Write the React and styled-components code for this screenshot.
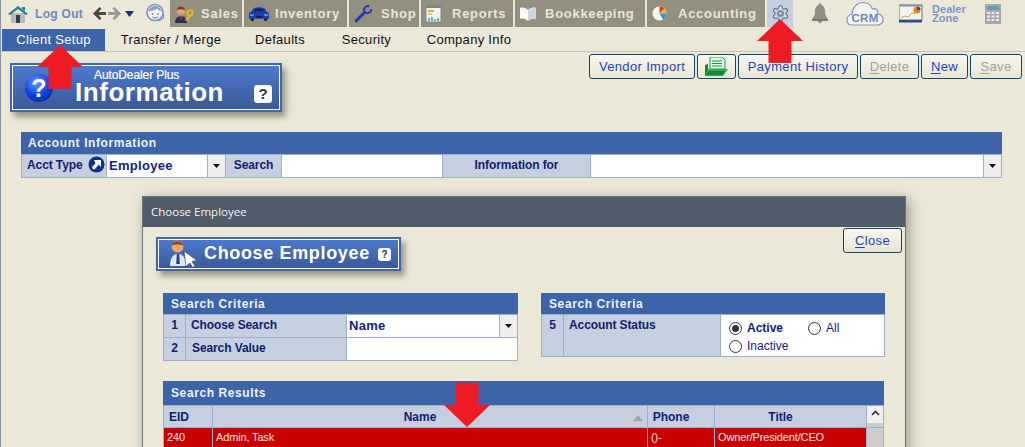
import styled, { createGlobalStyle } from "styled-components";

const GlobalStyle = createGlobalStyle`
  html, body {
    margin: 0;
    padding: 0;
    height: 100%;
    overflow: hidden;
    background: #ebe8d8;
  }
  * { box-sizing: border-box; }
`;

/* ---------- icons ---------- */
const HomeIcon = () => (
  <svg width="22" height="20" viewBox="0 0 22 20">
    <path d="M4 9h14v10H4z" fill="#b9bcbc" />
    <path d="M9 11h4v8H9z" fill="#33404a" />
    <path d="M1 10 11 2l10 8-2 1-8-6-8 6z" fill="#1f7f94" />
    <path d="M15 3h3v4l-3-2z" fill="#1f7f94" />
  </svg>
);
const BackArrow = ({ color }) => (
  <svg width="13" height="15" viewBox="0 0 13 15">
    <path d="M0 7.500 6.500 1l2 1.500L5.500 6H13v3H5.500l3 3.500-2 1.500z" fill={color} />
  </svg>
);
const NextArrow = ({ color }) => (
  <svg width="13" height="15" viewBox="0 0 13 15">
    <path d="M13 7.500 6.500 1l-2 1.500L7.500 6H0v3h7.500l-3 3.500 2 1.500z" fill={color} />
  </svg>
);
const Caret = () => (
  <svg width="9" height="6" viewBox="0 0 9 6">
    <path d="M0 0h9L4.500 6z" fill="#12308a" />
  </svg>
);
const AgentIcon = () => (
  <svg width="21" height="23" viewBox="0 0 21 23">
    <circle cx="10" cy="10.500" r="8" fill="#f4f3ea" stroke="#7590c6" strokeWidth="1.500" />
    <path d="M3 9c2-4 5-5.500 8-5 3 .5 5 2.500 6 5.500-3-.5-4-2-5-3-2 2-5 2.500-9 2.500z" fill="#8aa2d0" />
    <circle cx="7.500" cy="12" r=".9" fill="#6f8cc2" />
    <circle cx="13" cy="12" r=".9" fill="#6f8cc2" />
    <path d="M7.500 15c2 1.300 3.500 1.300 5.500 0M18.500 12v4l-5 3" fill="none" stroke="#7590c6" strokeWidth="1.200" />
  </svg>
);
const SalesIcon = () => (
  <svg width="21" height="20" viewBox="0 0 21 20">
    <path d="M1 19c0-5 3-7 6-7s6 2 6 7z" fill="#26344f" />
    <path d="M6 12h2l-1 5z" fill="#d33" />
    <circle cx="7" cy="7" r="4" fill="#e0a078" />
    <path d="M3 6c0-4 7-5 8 0-3-1-5-1-8 0z" fill="#7c3f1c" />
    <circle cx="16" cy="9" r="2.800" fill="none" stroke="#e8b923" strokeWidth="1.800" />
    <path d="M14.500 11 11 16l1 1 1-1 1 1 2-4z" fill="#e8b923" />
  </svg>
);
const CarIcon = () => (
  <svg width="23" height="14" viewBox="0 0 23 14">
    <path d="M3 10h3v4H3zM17 10h3v4h-3z" fill="#111" />
    <path d="M1 7c0-2 2-2 3-3 1-3 3-4 7.500-4S18 1 19 4c1 1 3 1 3 3v5H1z" fill="#1c3fb0" />
    <path d="M6 4c1-2 3-2.500 5.500-2.500S16 2 17 4z" fill="#0b1f5e" />
    <path d="M2 7h4v2H2zM17 7h4v2h-4z" fill="#5f87e8" />
    <path d="M8 9h7v2H8z" fill="#0b1f5e" />
  </svg>
);
const WrenchIcon = () => (
  <svg width="18" height="18" viewBox="0 0 18 18" fill="none">
    <path d="M2.200 15.800 10.500 7.500" stroke="#2337c0" strokeWidth="3" strokeLinecap="round" />
    <path d="M15.300 1.300a4 4 0 0 0-5 5.200l2 1.500a4 4 0 0 0 5-4" stroke="#2337c0" strokeWidth="2" />
  </svg>
);
const ReportIcon = () => (
  <svg width="18" height="18" viewBox="0 0 18 18">
    <path d="M1 1h15v16H1z" fill="#f3f3ea" stroke="#7c8a86" />
    <path d="M1 1h15v2H1z" fill="#6d8a8c" />
    <path d="M3 5h6v2H3z" fill="#eda83a" />
    <path d="M3 8h4v2H3z" fill="#eec477" />
    <path d="M3 13h2v3H3zM6 12h2v4H6zM9 14h2v2H9zM12 13h2v3h-2z" fill="#56bdb0" />
  </svg>
);
const BookIcon = () => (
  <svg width="16" height="14" viewBox="0 0 16 14">
    <path d="M0 1c3-1 6 0 8 2 2-2 5-3 8-2v11c-3-1-6 0-8 2-2-2-5-3-8-2z" fill="#fbfbf5" />
    <path d="M8 3v11c2-2 5-3 8-2V1c-3-1-6 0-8 2z" fill="#cfd6dc" />
  </svg>
);
const PieIcon = () => (
  <svg width="16" height="15" viewBox="0 0 16 15">
    <circle cx="7.500" cy="7.500" r="7" fill="#f6f6f0" />
    <path d="M7.500 7.500V.5a7 7 0 0 1 5 2.200z" fill="#d8452b" />
    <path d="M7.500 7.500l5-4.800a7 7 0 0 1 2 4.800z" fill="#eeb423" />
    <path d="M7.500 7.500h7a7 7 0 0 1-3.500 6z" fill="#2a9ac7" />
  </svg>
);
const GearIcon = () => (
  <svg width="19" height="19" viewBox="0 0 24 24">
    <path d="M12.220 2h-.44a2 2 0 0 0-2 2v.18a2 2 0 0 1-1 1.730l-.43.250a2 2 0 0 1-2 0l-.15-.080a2 2 0 0 0-2.730.730l-.22.380a2 2 0 0 0 .730 2.730l.15.100a2 2 0 0 1 1 1.720v.510a2 2 0 0 1-1 1.740l-.15.090a2 2 0 0 0-.730 2.730l.22.380a2 2 0 0 0 2.730.730l.15-.080a2 2 0 0 1 2 0l.43.250a2 2 0 0 1 1 1.730V20a2 2 0 0 0 2 2h.44a2 2 0 0 0 2-2v-.18a2 2 0 0 1 1-1.730l.43-.250a2 2 0 0 1 2 0l.15.080a2 2 0 0 0 2.730-.730l.22-.390a2 2 0 0 0-.730-2.730l-.15-.080a2 2 0 0 1-1-1.740v-.500a2 2 0 0 1 1-1.740l.15-.090a2 2 0 0 0 .730-2.730l-.22-.380a2 2 0 0 0-2.730-.730l-.15.080a2 2 0 0 1-2 0l-.43-.250a2 2 0 0 1-1-1.730V4a2 2 0 0 0-2-2z" fill="#cfd8e6" stroke="#6b788c" strokeWidth="1.500" />
    <circle cx="12" cy="12" r="4.500" fill="#7d8ca2" />
    <circle cx="12" cy="12" r="1.800" fill="#c4cfe0" />
  </svg>
);
const BellIcon = () => (
  <svg width="18" height="21" viewBox="0 0 18 21">
    <circle cx="9" cy="2" r="1.800" fill="#95958c" />
    <path d="M9 2c-3.500 0-5 3-5 6 0 4-1 6-3 8h16c-2-2-3-4-3-8 0-3-1.500-6-5-6z" fill="#8f8f86" />
    <path d="M1 16h16v2H1z" fill="#7a7a72" />
    <path d="M6 18h6l-3 2.500z" fill="#8f8f86" />
  </svg>
);
const CrmIcon = () => (
  <svg width="38" height="25" viewBox="0 0 38 25">
    <path d="M6 24c-3 0-5-2-5-5s2-5 5-5.500C6 7 11 1.500 17 1.500c5 0 8 2.500 9.500 6.500 1-.5 3-.5 4 .5 1.500 1.200 1.500 3 1.200 4.200 3 .8 5.300 3 5.300 6 0 3-2.500 5.300-5.500 5.300z" fill="#f5f4ea" stroke="#7f98cb" strokeWidth="1.200" />
    <text x="5.500" y="20.500" fontFamily="'Liberation Sans', Arial, sans-serif" fontSize="11.500" fontWeight="700" letterSpacing=".3" fill="#6a86c2">CRM</text>
  </svg>
);
const ChartIcon = () => (
  <svg width="24" height="19" viewBox="0 0 24 19">
    <path d="M0 1h23v15H0z" fill="#f2f3ee" stroke="#62718e" />
    <path d="M0 16h23v2.500H0z" fill="#2f4a8d" />
    <path d="M0.500 1h23v1.500H.5z" fill="#7b8fb0" />
    <path d="M2 14l4-2 3 1 4-4 3 1" fill="none" stroke="#d9a13a" strokeWidth="1" />
    <circle cx="18" cy="6" r="3.500" fill="#e47f22" />
    <path d="M18 6V2.500A3.500 3.500 0 0 1 21.500 6z" fill="#2f4a8d" />
  </svg>
);
const CalcIcon = () => (
  <svg width="16" height="20" viewBox="0 0 16 20">
    <path d="M0 0h16v20H0z" fill="#a5a8ad" />
    <path d="M2 2h12v4H2z" fill="#5fa3b3" />
    <path d="M2 8h3v2H2zM6.500 8h3v2h-3zM11 8h3v2h-3zM2 11.500h3v2H2zM6.500 11.500h3v2h-3zM11 11.500h3v2h-3zM2 15h3v2H2zM6.500 15h3v2h-3zM11 15h3v2h-3z" fill="#eeeee8" />
  </svg>
);
const QuestionOrb = () => (
  <svg width="30" height="30" viewBox="0 0 30 30">
    <defs>
      <radialGradient id="orb" cx=".4" cy=".3" r=".8">
        <stop offset="0" stopColor="#5f9bff" />
        <stop offset=".6" stopColor="#0e3fdc" />
        <stop offset="1" stopColor="#0a2a9c" />
      </radialGradient>
    </defs>
    <circle cx="15" cy="15" r="14" fill="url(#orb)" />
    <text x="15" y="24" textAnchor="middle" fontFamily="'Liberation Sans', Arial, sans-serif" fontSize="25" fontWeight="700" fill="#fff">?</text>
  </svg>
);
const EmployeeIcon = () => (
  <svg width="28" height="28" viewBox="0 0 28 28">
    <path d="M0 26c0-8 3-12 8-12s8 4 8 12z" fill="#dfe6f6" />
    <path d="M6.800 14h2.400l.6 10H6.200z" fill="#27408f" />
    <circle cx="7.500" cy="6.500" r="6" fill="#e9a76f" />
    <path d="M1.500 5.500c0-5 11-6 12 0-4-1.500-8-1.500-12 0z" fill="#8f4d1f" />
    <path d="M14 11l13 9.500-5 1 3 4.500-2.200 1.500-3-4.500-3.800 3.500z" fill="#fff" stroke="#333" strokeWidth=".6" />
  </svg>
);
const FolderIcon = () => (
  <svg width="23" height="20" viewBox="0 0 23 20">
    <path d="M5 0h12l3 3v9H5z" fill="#e4f6e0" stroke="#19a24a" />
    <path d="M7 4h10M7 6.500h10M7 9h10" stroke="#19a24a" />
    <path d="M0 19V8l3-1v5h17v2l-3 5z" fill="#0f8a3a" />
    <path d="M3 12h20l-5 7H0z" fill="#2caf4f" />
    <path d="M1 18l3-4h16l-2 4z" fill="#158a3f" />
  </svg>
);
const CircleArrow = () => (
  <svg width="17" height="17" viewBox="0 0 17 17">
    <circle cx="8.500" cy="8.500" r="8" fill="#0f3187" />
    <path d="M6 4h7v7l-2.300-2.300L7 13 5 13.500 4 11l3.500-3.800z" fill="#f3f5ff" />
  </svg>
);
const SmallCaret = () => (
  <svg width="7" height="4" viewBox="0 0 7 4">
    <path d="M0 0h7L3.500 4z" fill="#111" />
  </svg>
);
const UpChevron = () => (
  <svg width="9" height="6" viewBox="0 0 9 6">
    <path d="M1 5l3.500-3.500L8 5" fill="none" stroke="#333" strokeWidth="1.600" />
  </svg>
);

/* ---------- top nav ---------- */
const Page = styled.div`
  position: relative;
  width: 1025px;
  height: 447px;
  overflow: hidden;
  background: #ebe8d8;
  font-family: "Liberation Sans", Arial, sans-serif;
  border-left: 1px solid #8593a3;
`;

const TopNav = styled.nav`
  display: flex;
  align-items: stretch;
  height: 27px;
`;

const NavIcon = styled.div`
  display: flex;
  align-items: center;
  justify-content: center;
  margin-left: ${(p) => p.$ml || 0}px;
  width: ${(p) => p.$w}px;
`;

const LogOut = styled.span`
  align-self: center;
  margin-left: 6px;
  font-size: 12px;
  font-weight: 700;
  letter-spacing: 0.3px;
  color: #6c8bc6;
`;

const Tab = styled.div`
  display: flex;
  align-items: center;
  width: ${(p) => p.$w}px;
  margin-left: ${(p) => p.$ml || 2}px;
  background: #94907f;
  color: #ebe7d6;
  font-size: 13px;
  font-weight: 700;
  letter-spacing: 0.7px;
`;

const TabIcon = styled.span`
  display: flex;
  justify-content: center;
  width: ${(p) => p.$w}px;
  margin-left: ${(p) => p.$ml || 3}px;
`;

const TabLabel = styled.span`
  margin-left: ${(p) => p.$ml}px;
`;

const GearBox = styled.div`
  display: flex;
  align-items: center;
  justify-content: center;
  width: 26px;
  margin-left: 2px;
  background: #c3cfe0;
`;

const DealerZone = styled.div`
  align-self: center;
  margin-left: 9px;
  width: 39px;
  font-size: 11px;
  font-weight: 700;
  line-height: 9px;
  color: #7d95cb;
`;

/* ---------- sub nav ---------- */
const SubNav = styled.div`
  display: flex;
  margin-top: 2px;
  height: 23px;
  padding-left: 1px;
  border-bottom: 1px solid #c7c4b3;
`;

const SubItem = styled.div`
  width: ${(p) => p.$w}px;
  height: 22px;
  line-height: 22px;
  text-align: center;
  font-size: 13px;
  letter-spacing: 0.3px;
  color: ${(p) => (p.$active ? "#fff" : "#111")};
  background: ${(p) => (p.$active ? "#3d64a8" : "transparent")};
`;

/* ---------- toolbar + page banner ---------- */
const HeadRow = styled.div`
  display: flex;
  justify-content: space-between;
  align-items: flex-start;
  padding: 2px 3px 0 9px;
`;

const Banner = styled.div`
  display: flex;
  align-items: center;
  width: ${(p) => p.$w}px;
  height: ${(p) => p.$h}px;
  margin-top: ${(p) => p.$mt}px;
  padding: 0 ${(p) => p.$pr}px 0 ${(p) => p.$pl}px;
  color: #fff;
  background: linear-gradient(#4d7ad0, #3a5896);
  border: 2px solid #3d66b4;
  outline: 1px solid #fff;
  outline-offset: -3px;
  box-shadow: 4px 5px 6px rgba(90, 85, 65, 0.55);
`;

const BannerText = styled.div`
  display: flex;
  flex-direction: column;
  margin-left: 21px;
`;

const BannerSmall = styled.span`
  font-size: 12px;
  line-height: 12px;
  letter-spacing: -0.1px;
  margin-left: 19px;
  -webkit-text-stroke: 0.2px #fff;
`;

const BannerBig = styled.span`
  margin: -2px 0 2px;
  font-size: 26px;
  font-weight: 700;
  line-height: 26px;
  letter-spacing: 0.55px;
`;

const HelpBadge = styled.span`
  display: flex;
  align-items: center;
  justify-content: center;
  width: ${(p) => p.$size}px;
  height: ${(p) => p.$size}px;
  margin-left: auto;
  margin-top: ${(p) => p.$mt || 0}px;
  border-radius: 3px;
  background: #fbfbf8;
  color: #26365c;
  font-size: ${(p) => p.$size - 3}px;
  font-weight: 700;
`;

const Toolbar = styled.div`
  display: flex;
  gap: 2px;
`;

const Button = styled.button`
  display: flex;
  align-items: center;
  justify-content: center;
  width: ${(p) => p.$w}px;
  height: 25px;
  padding: 0;
  font-family: inherit;
  font-size: 13px;
  letter-spacing: 0.35px;
  color: ${(p) => (p.$off ? "#a3a299" : "#1b45c6")};
  background: linear-gradient(#f9f7ee, #e9e5d3);
  border: 1px solid #0f4476;
  border-radius: 3px;
  u {
    text-decoration-thickness: 1px;
    text-underline-offset: 2px;
  }
`;

/* ---------- data panels ---------- */
const Panel = styled.section`
  width: ${(p) => p.$w}px;
  margin: ${(p) => p.$m || 0};
`;

const PanelTitle = styled.div`
  height: ${(p) => p.$h || 21}px;
  line-height: ${(p) => p.$h || 22}px;
  padding-left: ${(p) => p.$pl || 8}px;
  background: #3d64a8;
  color: #eef1f8;
  font-size: 12px;
  font-weight: 700;
  letter-spacing: 0.6px;
`;

const Grid = styled.div`
  display: grid;
  grid-template-columns: ${(p) => p.$cols};
  grid-auto-rows: ${(p) => p.$row}px;
  gap: 1px;
  padding: 1px;
  background: #9db0ca;
`;

const Label = styled.div`
  display: flex;
  align-items: flex-start;
  justify-content: ${(p) => p.$align || "flex-start"};
  gap: 5px;
  padding: 3px 0 0 ${(p) => p.$pl || 0}px;
  background: #c5cfdf;
  color: #0f1f6e;
  font-size: 12px;
  font-weight: 700;
  letter-spacing: -0.1px;
  white-space: nowrap;
  svg {
    flex-shrink: 0;
    margin-top: -2px;
  }
`;

const Value = styled.div`
  grid-column: span ${(p) => p.$span || 1};
  padding: 3px 0 0 2px;
  background: #fff;
  color: #10228a;
  font-size: 13px;
  font-weight: 700;
  letter-spacing: 0.3px;
`;

const DropBtn = styled.div`
  display: flex;
  align-items: center;
  justify-content: center;
  background: #efefef;
`;

const StatusCell = styled.div`
  display: grid;
  grid-template-columns: 79px 1fr;
  align-content: start;
  row-gap: 4px;
  padding: 6px 0 0 8px;
  background: #fff;
`;

const RadioOption = styled.label`
  display: flex;
  align-items: center;
  gap: 5px;
  height: 14px;
  color: #10228a;
  font-size: 12px;
  font-weight: ${(p) => (p.$on ? 700 : 400)};
`;

const RadioDot = styled.span`
  display: flex;
  align-items: center;
  justify-content: center;
  width: 13px;
  height: 13px;
  border: 1px solid #333;
  border-radius: 50%;
  background: #fff;
  &::after {
    content: "";
    display: ${(p) => (p.$on ? "block" : "none")};
    width: 7px;
    height: 7px;
    border-radius: 50%;
    background: #333;
  }
`;

/* ---------- dialog ---------- */
const Dialog = styled.div`
  position: absolute;
  left: 141px;
  top: 196px;
  width: 764px;
  height: 330px;
  background: #ebe8d8;
  border: 1px solid #6b7280;
  box-shadow: 3px 3px 12px rgba(80, 75, 55, 0.5);
`;

const DialogTitle = styled.div`
  height: 30px;
  line-height: 30px;
  padding-left: 8px;
  background: #515c6b;
  color: #f2f2f2;
  font-family: "Open Sans", "Noto Sans", sans-serif;
  font-size: 11.500px;
`;

const DialogHead = styled.div`
  display: flex;
  justify-content: space-between;
  align-items: flex-start;
  padding: 1px 3px 0 13px;
`;

const EmployeeTitle = styled.span`
  margin: 0 0 2px 6px;
  font-size: 18px;
  font-weight: 700;
  letter-spacing: 0.65px;
  white-space: nowrap;
`;

const DialogBody = styled.div`
  padding: 22px 0 0 20px;
`;

const CriteriaRow = styled.div`
  display: flex;
  align-items: flex-start;
  gap: 23px;
`;

const HeadCell = styled.div`
  display: flex;
  align-items: center;
  justify-content: ${(p) => (p.$left ? "flex-start" : "center")};
  padding: 0 ${(p) => (p.$left ? 0 : 20)}px 0 ${(p) => (p.$left ? 5 : 0)}px;
  position: relative;
  background: #c5cfdf;
  color: #0f1f6e;
  font-size: 12px;
  font-weight: 700;
`;

const SortMark = styled.span`
  position: absolute;
  right: 4px;
  top: 9px;
  width: 0;
  height: 0;
  border-left: 5px solid transparent;
  border-right: 5px solid transparent;
  border-bottom: 6px solid #a5a5a5;
`;

const ResultsBody = styled.div`
  display: grid;
  grid-template-columns: 48px 434px 66px 151px 16px;
  gap: 0 1px;
  padding-left: 1px;
  background: #9db0ca;
  grid-auto-rows: 22px;
`;

const RedCell = styled.div`
  padding: 3px 0 0 3px;
  background: #c80000;
  color: #fde6e6;
  font-size: 11px;
  letter-spacing: -0.15px;
  white-space: nowrap;
`;

const ScrollTop = styled.div`
  display: flex;
  justify-content: center;
  padding-top: 4px;
  background: linear-gradient(#f0f0f0 17px, #cdcdcd 17px);
`;

const ScrollTrack = styled.div`
  background: #cdcdcd;
`;

/* ---------- red callout arrows ---------- */
const Callout = styled.svg`
  position: absolute;
  left: ${(p) => p.$x}px;
  top: ${(p) => p.$y}px;
`;

const UpArrow = ({ x, y }) => (
  <Callout $x={x} $y={y} width="46" height="44" viewBox="0 0 46 44">
    <path d="M23 0 46 22H34.500V44H11.500V22H0z" fill="#ed1c24" />
  </Callout>
);

export default function App() {
  return (
    <Page>
      <GlobalStyle />
      <TopNav>
        <NavIcon $w={22} $ml={6}><HomeIcon /></NavIcon>
        <LogOut>Log Out</LogOut>
        <NavIcon $w={13} $ml={10}><BackArrow color="#4a4a44" /></NavIcon>
        <NavIcon $w={13} $ml={2}><NextArrow color="#9b9a8c" /></NavIcon>
        <NavIcon $w={9} $ml={4}><Caret /></NavIcon>
        <NavIcon $w={21} $ml={11}><AgentIcon /></NavIcon>
        <Tab $w={72} $ml={4}>
          <TabIcon $w={22}><SalesIcon /></TabIcon>
          <TabLabel $ml={6}>Sales</TabLabel>
        </Tab>
        <Tab $w={103}>
          <TabIcon $w={22} $ml={4}><CarIcon /></TabIcon>
          <TabLabel $ml={5}>Inventory</TabLabel>
        </Tab>
        <Tab $w={70} $ml={2}>
          <TabIcon $w={20} $ml={4}><WrenchIcon /></TabIcon>
          <TabLabel $ml={8}>Shop</TabLabel>
        </Tab>
        <Tab $w={92}>
          <TabIcon $w={20}><ReportIcon /></TabIcon>
          <TabLabel $ml={8}>Reports</TabLabel>
        </Tab>
        <Tab $w={130}>
          <TabIcon $w={20}><BookIcon /></TabIcon>
          <TabLabel $ml={7}>Bookkeeping</TabLabel>
        </Tab>
        <Tab $w={118}>
          <TabIcon $w={19}><PieIcon /></TabIcon>
          <TabLabel $ml={9}>Accounting</TabLabel>
        </Tab>
        <GearBox><GearIcon /></GearBox>
        <NavIcon $w={18} $ml={18}><BellIcon /></NavIcon>
        <NavIcon $w={38} $ml={17}><CrmIcon /></NavIcon>
        <NavIcon $w={24} $ml={15}><ChartIcon /></NavIcon>
        <DealerZone>Dealer Zone</DealerZone>
        <NavIcon $w={16} $ml={14}><CalcIcon /></NavIcon>
      </TopNav>

      <SubNav>
        <SubItem $w={103} $active>Client Setup</SubItem>
        <SubItem $w={132}>Transfer / Merge</SubItem>
        <SubItem $w={86}>Defaults</SubItem>
        <SubItem $w={87}>Security</SubItem>
        <SubItem $w={118}>Company Info</SubItem>
      </SubNav>

      <HeadRow>
        <Banner $w={272} $h={49} $mt={9} $pl={12} $pr={8}>
          <QuestionOrb />
          <BannerText>
            <BannerSmall>AutoDealer Plus</BannerSmall>
            <BannerBig>Information</BannerBig>
          </BannerText>
          <HelpBadge $size={18} $mt={12}>?</HelpBadge>
        </Banner>
        <Toolbar>
          <Button $w={106}>Vendor Import</Button>
          <Button $w={39}><FolderIcon /></Button>
          <Button $w={120}>Payment History</Button>
          <Button $w={59} $off><span><u>D</u>elete</span></Button>
          <Button $w={47}><span><u>N</u>ew</span></Button>
          <Button $w={52} $off><span><u>S</u>ave</span></Button>
        </Toolbar>
      </HeadRow>

      <Panel $w={981} $m="20px 0 0 20px">
        <PanelTitle $h={22} $pl={7}>Account Information</PanelTitle>
        <Grid $cols="84px 100px 17px 55px 160px 147px 392px 17px" $row={22}>
          <Label $pl={5}>Acct Type<CircleArrow /></Label>
          <Value>Employee</Value>
          <DropBtn><SmallCaret /></DropBtn>
          <Label $align="center">Search</Label>
          <Value />
          <Label $align="center">Information for</Label>
          <Value />
          <DropBtn><SmallCaret /></DropBtn>
        </Grid>
      </Panel>

      <Dialog>
        <DialogTitle>Choose Employee</DialogTitle>
        <DialogHead>
          <Banner $w={245} $h={34} $mt={9} $pl={12} $pr={8}>
            <EmployeeIcon />
            <EmployeeTitle>Choose Employee</EmployeeTitle>
            <HelpBadge $size={13}>?</HelpBadge>
          </Banner>
          <Button $w={59}><span><u>C</u>lose</span></Button>
        </DialogHead>
        <DialogBody>
          <CriteriaRow>
            <Panel $w={355}>
              <PanelTitle>Search Criteria</PanelTitle>
              <Grid $cols="21px 160px 152px 17px" $row={22}>
                <Label $align="center">1</Label>
                <Label $pl={5}>Choose Search</Label>
                <Value>Name</Value>
                <DropBtn><SmallCaret /></DropBtn>
                <Label $align="center">2</Label>
                <Label $pl={6}>Search Value</Label>
                <Value $span={2} />
              </Grid>
            </Panel>
            <Panel $w={344}>
              <PanelTitle>Search Criteria</PanelTitle>
              <Grid $cols="21px 156px 163px" $row={41}>
                <Label $align="center">5</Label>
                <Label $pl={5}>Account Status</Label>
                <StatusCell>
                  <RadioOption $on><RadioDot $on />Active</RadioOption>
                  <RadioOption><RadioDot />All</RadioOption>
                  <RadioOption><RadioDot />Inactive</RadioOption>
                </StatusCell>
              </Grid>
            </Panel>
          </CriteriaRow>

          <Panel $w={721} $m="20px 0 0 0">
            <PanelTitle $h={24}>Search Results</PanelTitle>
            <Grid $cols="48px 434px 66px 151px 16px" $row={21}>
              <HeadCell $left>EID</HeadCell>
              <HeadCell>Name<SortMark /></HeadCell>
              <HeadCell>Phone</HeadCell>
              <HeadCell>Title</HeadCell>
              <ScrollTop><UpChevron /></ScrollTop>
            </Grid>
            <ResultsBody>
              <RedCell>240</RedCell>
              <RedCell>Admin, Task</RedCell>
              <RedCell>()-</RedCell>
              <RedCell>Owner/President/CEO</RedCell>
              <ScrollTrack />
            </ResultsBody>
          </Panel>
        </DialogBody>
      </Dialog>

      <UpArrow x={36} y={45} />
      <UpArrow x={756} y={19} />
      <Callout $x={443} $y={383} width="46" height="44" viewBox="0 0 46 44">
        <path d="M23 44 46 22H34.500V0H11.500V22H0z" fill="#ed1c24" />
      </Callout>
    </Page>
  );
}
